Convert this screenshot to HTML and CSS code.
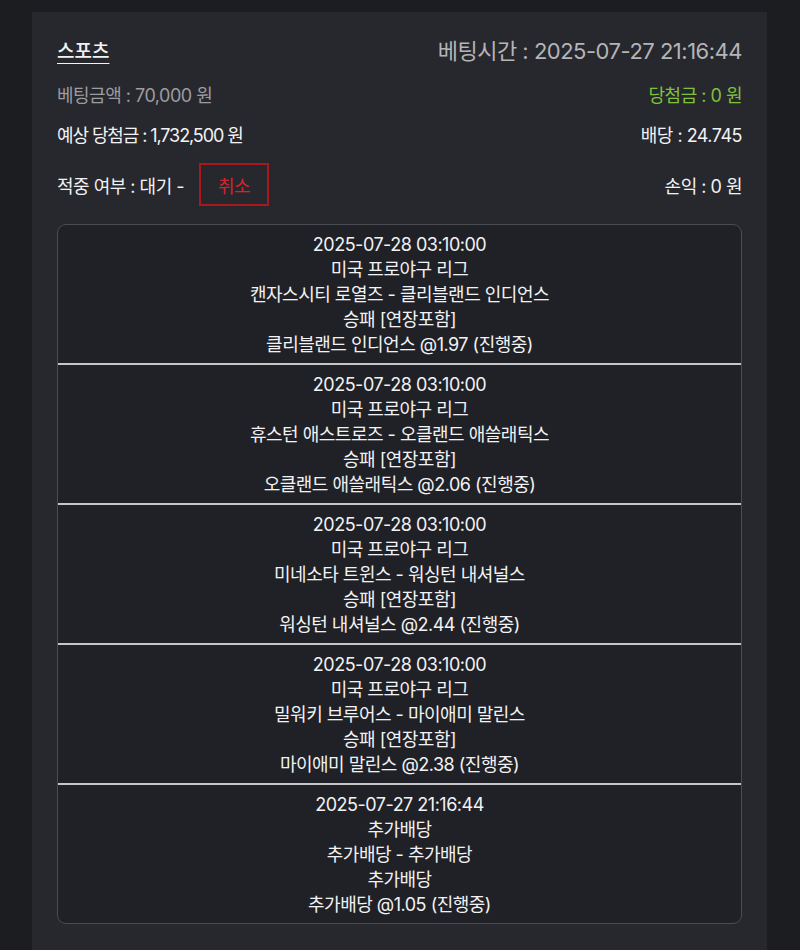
FILE: index.html
```html
<!DOCTYPE html>
<html lang="ko">
<head>
    <meta charset="UTF-8">
    <meta name="viewport" content="width=device-width, initial-scale=1.0">
    <title>베팅내역</title>
    <link rel="stylesheet" href="styles.css">
</head>
<body>
    <div class="card">
        <div class="row row-top">
            <span class="game-type">스포츠</span>
            <span class="bet-time">베팅시간 : 2025-07-27 21:16:44</span>
        </div>
        <div class="row row-amount">
            <span class="muted">베팅금액 : 70,000 원</span>
            <span class="win">당첨금 : 0 원</span>
        </div>
        <div class="row row-expect">
            <span class="expect">예상 당첨금 : 1,732,500 원</span>
            <span>배당 : 24.745</span>
        </div>
        <div class="row row-status">
            <div class="status">
                <span>적중 여부 : 대기 -</span>
                <button class="cancel-btn">취소</button>
            </div>
            <span>손익 : 0 원</span>
        </div>

        <div class="bet-list">
            <div class="bet-item">
                <p>2025-07-28 03:10:00</p>
                <p>미국 프로야구 리그</p>
                <p>캔자스시티 로열즈 - 클리블랜드 인디언스</p>
                <p>승패 [연장포함]</p>
                <p>클리블랜드 인디언스 @1.97 (진행중)</p>
            </div>
            <div class="bet-item">
                <p>2025-07-28 03:10:00</p>
                <p>미국 프로야구 리그</p>
                <p>휴스턴 애스트로즈 - 오클랜드 애쓸래틱스</p>
                <p>승패 [연장포함]</p>
                <p>오클랜드 애쓸래틱스 @2.06 (진행중)</p>
            </div>
            <div class="bet-item">
                <p>2025-07-28 03:10:00</p>
                <p>미국 프로야구 리그</p>
                <p>미네소타 트윈스 - 워싱턴 내셔널스</p>
                <p>승패 [연장포함]</p>
                <p>워싱턴 내셔널스 @2.44 (진행중)</p>
            </div>
            <div class="bet-item">
                <p>2025-07-28 03:10:00</p>
                <p>미국 프로야구 리그</p>
                <p>밀워키 브루어스 - 마이애미 말린스</p>
                <p>승패 [연장포함]</p>
                <p>마이애미 말린스 @2.38 (진행중)</p>
            </div>
            <div class="bet-item">
                <p>2025-07-27 21:16:44</p>
                <p>추가배당</p>
                <p>추가배당 - 추가배당</p>
                <p>추가배당</p>
                <p>추가배당 @1.05 (진행중)</p>
            </div>
        </div>
    </div>
</body>
</html>
```

FILE: styles.css
```css
body {
    margin: 0;
    padding-top: 12px;
    background-color: #1c1d21;
    font-family: Inter, "Noto Sans CJK KR", sans-serif;
    color: #f2f2f4;
    letter-spacing: -0.5px;
}
.card {
    width: 735px;
    min-height: 938px;
    margin-left: 32px;
    box-sizing: border-box;
    padding: 22px 25px 0 25px;
    background-color: #27282d;
}
.row {
    display: flex;
    justify-content: space-between;
    align-items: center;
    font-size: 18px;
}
.row-top {
    height: 30px;
}
.row-amount {
    height: 26px;
    margin-top: 17px;
}
.row-expect {
    height: 26px;
    margin-top: 14px;
}
.row-status {
    height: 43px;
    margin-top: 16px;
}
.game-type {
    font-size: 19px;
    font-weight: 500;
    letter-spacing: 0;
    text-decoration: underline;
    text-underline-offset: 5px;
}
.bet-time {
    font-size: 22px;
    color: #b4b4b9;
}
.muted {
    color: #9c9ca1;
}
.win {
    color: #7ec23b;
}
.expect {
    letter-spacing: -1.1px;
}
.status {
    display: flex;
    align-items: center;
    gap: 15px;
}
.cancel-btn {
    width: 70px;
    height: 43px;
    background: transparent;
    border: 2px solid #a8181c;
    color: #d8232a;
    font-family: inherit;
    font-size: 18px;
    letter-spacing: -0.5px;
    padding: 0;
}
.bet-list {
    margin-top: 18px;
    border: 1px solid #4b4c52;
    border-radius: 9px;
    background-color: #202126;
    overflow: hidden;
}
.bet-item {
    padding: 7px 0 6px;
    text-align: center;
    font-size: 18px;
}
.bet-item + .bet-item {
    border-top: 2px solid #c6c6c9;
}
.bet-item p {
    margin: 0;
    line-height: 25px;
}
```
